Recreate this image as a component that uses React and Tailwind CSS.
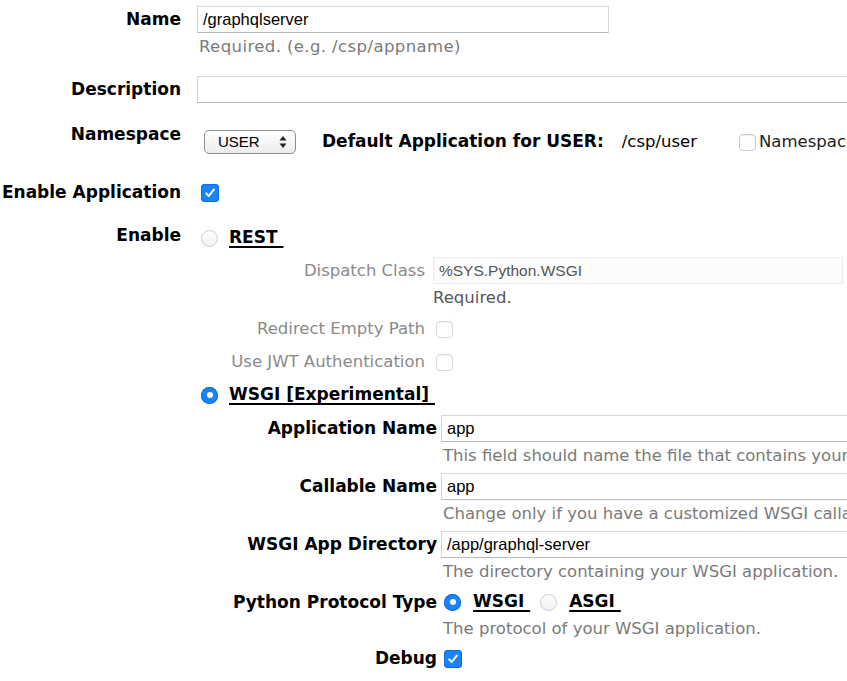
import React from 'react';

const labelFont = { fontFamily: '"DejaVu Sans", sans-serif' };

const Check = ({ checked }) =>
    checked ? (
        <span className="inline-flex items-center justify-center w-[18px] h-[18px] rounded-[4px] bg-[#1a82fb] shadow-[inset_0_0_0_1px_#0f6fe0]">
            <svg width="12" height="12" viewBox="0 0 12 12">
                <path d="M2.2 6.4 L4.8 9 L9.8 2.6" fill="none" stroke="white" strokeWidth="2" strokeLinecap="round" strokeLinejoin="round" />
            </svg>
        </span>
    ) : (
        <span className="inline-block w-[17px] h-[17px] rounded-[4px] border border-[#c9c9c9] bg-white shadow-[inset_0_1px_1px_rgba(0,0,0,0.06)]"></span>
    );

const Radio = ({ checked }) =>
    checked ? (
        <span className="inline-flex items-center justify-center w-[17px] h-[17px] rounded-full bg-[#1a82fb] shadow-[inset_0_0_0_1px_#0f6fe0]">
            <span className="w-[6px] h-[6px] rounded-full bg-white"></span>
        </span>
    ) : (
        <span className="inline-block w-[17px] h-[17px] rounded-full border border-[#cfcfcf] bg-gradient-to-b from-white to-[#f1f1f1]"></span>
    );

const LinkLabel = ({ children }) => (
    <span className="font-bold text-[17px] text-black underline underline-offset-[3px] decoration-[1.5px] whitespace-pre" style={labelFont}>
        {children}
    </span>
);

const TextInput = ({ value, className = '' }) => (
    <div
        className={`h-[27px] border border-[#d6d6d6] border-b-[#b9b9b9] bg-white px-[5px] flex items-center text-[16.5px] text-black ${className}`}
        style={{ fontFamily: '"Liberation Sans", Arial, sans-serif' }}
    >
        {value}
    </div>
);

const Help = ({ children, className = '' }) => (
    <div className={`text-[16.5px] text-[#7a7a7a] whitespace-nowrap ${className}`} style={labelFont}>
        {children}
    </div>
);

export default function App() {
    return (
        <div className="w-[847px] h-[681px] overflow-hidden bg-white pt-[6px]" style={labelFont}>
            {/* Name */}
            <div className="flex">
                <div className="w-[181px] shrink-0 text-right font-bold text-[17px] leading-[27px]">Name</div>
                <div className="ml-[16px]">
                    <TextInput value="/graphqlserver" className="w-[412px]" />
                    <Help className="leading-[28px] ml-[2px] tracking-[0.4px]">Required. (e.g. /csp/appname)</Help>
                </div>
            </div>

            {/* Description */}
            <div className="flex mt-[15px]">
                <div className="w-[181px] shrink-0 text-right font-bold text-[17px] leading-[27px]">Description</div>
                <div className="ml-[16px]">
                    <TextInput value="" className="w-[700px]" />
                </div>
            </div>

            {/* Namespace */}
            <div className="flex mt-[19px]">
                <div className="w-[181px] shrink-0 text-right font-bold text-[17px] leading-[24px]">Namespace</div>
                <div className="ml-[23px] pt-[8px] flex items-center h-[32px] whitespace-nowrap">
                    <div
                        className="w-[92px] h-[24px] rounded-[5px] border border-[#8e8e8e] bg-gradient-to-b from-white to-[#ececec] flex items-center justify-between pl-[13px] pr-[8px] text-[15px]"
                        style={{ fontFamily: '"Liberation Sans", Arial, sans-serif' }}
                    >
                        <span>USER</span>
                        <svg width="8" height="14" viewBox="0 0 8 14">
                            <path d="M4 1 L7.5 5.5 H0.5 Z M4 13 L7.5 8.5 H0.5 Z" fill="#222" />
                        </svg>
                    </div>
                    <span className="ml-[26px] font-bold text-[17px]">Default Application for USER:</span>
                    <span className="ml-[18px] text-[16.5px]">/csp/user</span>
                    <span className="ml-[42px] flex items-center">
                        <Check checked={false} />
                        <span className="ml-[3px] text-[16.5px] text-[#222]">Namespace Default Application</span>
                    </span>
                </div>
            </div>

            {/* Enable Application */}
            <div className="flex mt-[27px] h-[24px] items-center">
                <div className="w-[181px] shrink-0 text-right font-bold text-[17px]">Enable Application</div>
                <div className="ml-[20px] flex items-center">
                    <Check checked />
                </div>
            </div>

            {/* Enable */}
            <div className="flex mt-[19px] h-[24px] items-center">
                <div className="w-[181px] shrink-0 text-right font-bold text-[17px]">Enable</div>
                <div className="ml-[20px] flex items-center pt-[4px]">
                    <Radio checked={false} />
                    <span className="ml-[11px]"><LinkLabel>REST </LinkLabel></span>
                </div>
            </div>

            {/* REST options */}
            <div className="flex mt-[9px]">
                <div className="w-[425px] shrink-0 text-right text-[16.5px] text-[#8a8a8a] leading-[27px]">Dispatch Class</div>
                <div className="ml-[8px]">
                    <div
                        className="w-[410px] h-[27px] border border-[#ebebeb] bg-[#fcfcfc] px-[5px] flex items-center text-[15.5px] text-[#555]"
                        style={{ fontFamily: '"Liberation Sans", Arial, sans-serif' }}
                    >
                        %SYS.Python.WSGI
                    </div>
                    <div className="text-[16.5px] text-[#555] leading-[28px]">Required.</div>
                </div>
            </div>
            <div className="flex mt-[5px] h-[24px] items-center">
                <div className="w-[425px] shrink-0 text-right text-[16.5px] text-[#8a8a8a]">Redirect Empty Path</div>
                <div className="ml-[11px] flex items-center opacity-70">
                    <Check checked={false} />
                </div>
            </div>
            <div className="flex mt-[9px] h-[24px] items-center">
                <div className="w-[425px] shrink-0 text-right text-[16.5px] text-[#8a8a8a]">Use JWT Authentication</div>
                <div className="ml-[11px] flex items-center opacity-70">
                    <Check checked={false} />
                </div>
            </div>

            {/* WSGI radio */}
            <div className="flex mt-[9px] h-[24px] items-center">
                <div className="w-[201px] shrink-0"></div>
                <div className="flex items-center">
                    <Radio checked />
                    <span className="ml-[11px]"><LinkLabel>WSGI [Experimental] </LinkLabel></span>
                </div>
            </div>

            {/* WSGI options */}
            <div className="flex mt-[8px]">
                <div className="w-[437px] shrink-0 text-right font-bold text-[17px] leading-[27px]">Application Name</div>
                <div className="ml-[4px]">
                    <TextInput value="app" className="w-[450px]" />
                    <Help className="leading-[27px] ml-[2px]">This field should name the file that contains your callable WSGI application.</Help>
                </div>
            </div>
            <div className="flex mt-[4px]">
                <div className="w-[437px] shrink-0 text-right font-bold text-[17px] leading-[27px]">Callable Name</div>
                <div className="ml-[4px]">
                    <TextInput value="app" className="w-[450px]" />
                    <Help className="leading-[27px] ml-[2px]">Change only if you have a customized WSGI callable name.</Help>
                </div>
            </div>
            <div className="flex mt-[4px]">
                <div className="w-[437px] shrink-0 text-right font-bold text-[17px] leading-[27px]">WSGI App Directory</div>
                <div className="ml-[4px]">
                    <TextInput value="/app/graphql-server" className="w-[450px]" />
                    <Help className="leading-[28px] ml-[2px]">The directory containing your WSGI application.</Help>
                </div>
            </div>
            <div className="flex mt-[4px]">
                <div className="w-[437px] shrink-0 text-right font-bold text-[17px] leading-[24px]">Python Protocol Type</div>
                <div className="ml-[7px]">
                    <div className="flex items-center h-[24px]">
                        <Radio checked />
                        <span className="ml-[12px]"><LinkLabel>WSGI </LinkLabel></span>
                        <span className="ml-[10px] flex items-center"><Radio checked={false} /></span>
                        <span className="ml-[12px]"><LinkLabel>ASGI </LinkLabel></span>
                    </div>
                    <Help className="leading-[30px] -ml-[1px]">The protocol of your WSGI application.</Help>
                </div>
            </div>
            <div className="flex mt-[3px] h-[24px] items-center">
                <div className="w-[437px] shrink-0 text-right font-bold text-[17px]">Debug</div>
                <div className="ml-[7px] flex items-center">
                    <Check checked />
                </div>
            </div>
        </div>
    );
}
